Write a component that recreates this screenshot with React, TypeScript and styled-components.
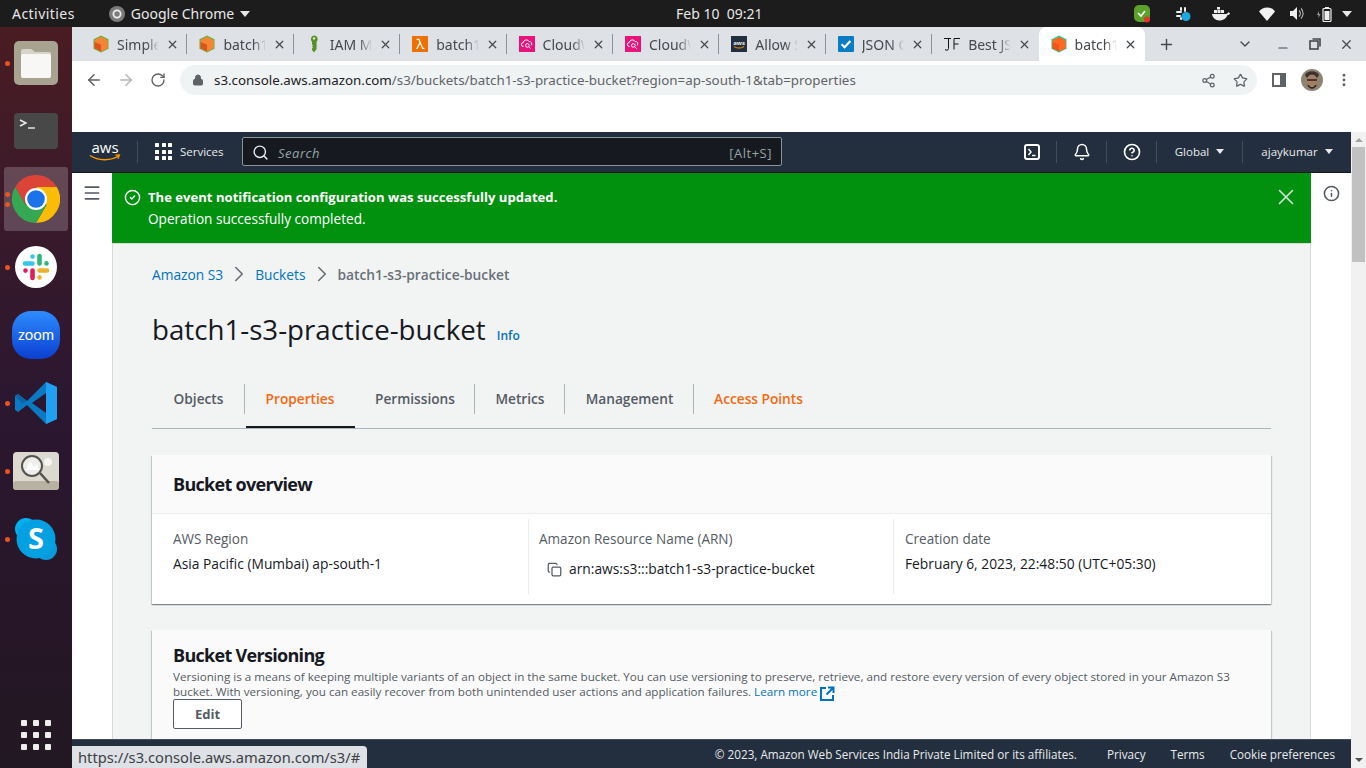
import React from "react";
import styled, { createGlobalStyle } from "styled-components";
import { ArrowLeft, ArrowRight, RotateCw, Lock, Share2, Star, ChevronDown, Plus, X, Minus, MoreVertical, Search, Bell, CircleHelp, CircleCheck, Info, Menu, ChevronRight, Copy } from "lucide-react";

const UI = `"Noto Sans", "Open Sans", sans-serif`;
const AWS = `"Open Sans", "Noto Sans", sans-serif`;

const GlobalStyle = createGlobalStyle`
  html, body { margin: 0; padding: 0; width: 1366px; height: 768px; overflow: hidden; background: #fff; }
  * { box-sizing: border-box; }
`;

const Desktop = styled.div`
  width: 1366px;
  height: 768px;
  display: flex;
  flex-direction: column;
  position: relative;
  overflow: hidden;
  font-family: ${UI};
`;

/* gnome top bar */
const TopBar = styled.div`
  height: 27px;
  flex: none;
  background: #1c1c1c;
  color: #e8e8e6;
  font-size: 14px;
  display: flex;
  align-items: center;
  padding: 0 12px;
`;
const TopLeft = styled.div`
  width: 664px;
  flex: none;
  display: flex;
  align-items: center;
  gap: 34px;
`;
const Activities = styled.span`
  letter-spacing: 0.45px;
`;
const AppMenu = styled.div`
  display: flex;
  align-items: center;
  gap: 6px;
`;
const Caret = styled.span<{ $size?: number; $color?: string }>`
  width: 0;
  height: 0;
  display: inline-block;
  border-left: ${(p) => p.$size ?? 5}px solid transparent;
  border-right: ${(p) => p.$size ?? 5}px solid transparent;
  border-top: ${(p) => (p.$size ?? 5) + 1}px solid ${(p) => p.$color ?? "#e8e8e6"};
`;
const Clock = styled.div`
  word-spacing: 0;
`;
const Tray = styled.div`
  margin-left: auto;
  display: flex;
  align-items: center;
`;
const TraySlot = styled.span<{ $w: number }>`
  width: ${(p) => p.$w}px;
  height: 27px;
  display: inline-flex;
  align-items: center;
  justify-content: center;
`;

const Body = styled.div`
  flex: 1;
  display: flex;
  min-height: 0;
`;

/* ubuntu dock */
const Dock = styled.div`
  width: 72px;
  flex: none;
  display: flex;
  flex-direction: column;
  align-items: center;
  padding: 2px 0 0;
  background: linear-gradient(180deg, #4a1c22 0%, #3a1a2b 25%, #2b1730 50%, #271628 80%, #221822 100%);
`;
const DockItem = styled.div<{ $active?: boolean }>`
  width: 64px;
  height: 64px;
  margin: 2px 0;
  flex: none;
  position: relative;
  display: flex;
  align-items: center;
  justify-content: center;
  border-radius: 3px;
  background: ${(p) => (p.$active ? "rgba(255,255,255,0.2)" : "transparent")};
`;
const Running = styled.span<{ $top: number }>`
  position: absolute;
  left: 1px;
  top: ${(p) => p.$top}px;
  width: 5px;
  height: 5px;
  border-radius: 50%;
  background: #e95420;
`;
const AppGrid = styled.div`
  margin-top: auto;
  margin-bottom: 18px;
  display: grid;
  grid-template-columns: repeat(3, 6px);
  gap: 6px;
`;
const AppDot = styled.span`
  width: 6px;
  height: 6px;
  border-radius: 1px;
  background: #eeeeec;
`;

const Browser = styled.div`
  flex: 1;
  min-width: 0;
  display: flex;
  flex-direction: column;
`;

const TabStrip = styled.div`
  height: 34px;
  flex: none;
  background: #dee1e6;
  display: flex;
  align-items: stretch;
  padding-left: 9px;
`;
const Tab = styled.div<{ $active?: boolean; $last?: boolean }>`
  width: 106.4px;
  flex: none;
  position: relative;
  display: flex;
  align-items: center;
  padding: 0 8px 0 11px;
  gap: 7px;
  color: #45494e;
  font-size: 14px;
  background: ${(p) => (p.$active ? "#fff" : "transparent")};
  border-radius: ${(p) => (p.$active ? "8px 8px 0 0" : "0")};
  &::after {
    content: "";
    display: ${(p) => (p.$active || p.$last ? "none" : "block")};
    position: absolute;
    right: 0;
    top: 7px;
    height: 20px;
    width: 1px;
    background: #8e9196;
  }
`;
const Favicon = styled.span`
  width: 18px;
  height: 18px;
  flex: none;
  display: flex;
  align-items: center;
  justify-content: center;
`;
const TabTitle = styled.span`
  flex: 1;
  min-width: 0;
  white-space: nowrap;
  overflow: hidden;
  -webkit-mask-image: linear-gradient(90deg, #000 70%, transparent 100%);
  mask-image: linear-gradient(90deg, #000 70%, transparent 100%);
`;
const TabActions = styled.div`
  flex: 1;
  display: flex;
  align-items: center;
  color: #45494e;
`;
const IconSlot = styled.span<{ $w: number; $gap?: number }>`
  width: ${(p) => p.$w}px;
  margin-left: ${(p) => p.$gap ?? 0}px;
  flex: none;
  display: inline-flex;
  align-items: center;
  justify-content: center;
`;
const MutedSlot = styled(IconSlot)`
  color: #b4b7bb;
`;

const Toolbar = styled.div`
  height: 38px;
  flex: none;
  display: flex;
  align-items: center;
  background: #fff;
  padding: 0 0 0 10px;
  color: #5f6368;
`;
const Omnibox = styled.div`
  width: 1077px;
  height: 30px;
  margin-left: 10px;
  flex: none;
  border-radius: 15px;
  background: #f0f3f4;
  display: flex;
  align-items: center;
  padding: 0 2px 0 12px;
  font-size: 13.35px;
  color: #5f6368;
`;
const Url = styled.span`
  flex: 1;
  margin-left: 10px;
  b { font-weight: 400; color: #202124; }
`;
const BlankBar = styled.div`
  height: 33px;
  flex: none;
  background: #fff;
`;

const Viewport = styled.div`
  flex: 1;
  min-height: 0;
  display: flex;
`;
const Page = styled.div`
  flex: 1;
  min-width: 0;
  display: flex;
  flex-direction: column;
  font-family: ${AWS};
`;
const ScrollBar = styled.div`
  width: 15px;
  flex: none;
  background: #f1f1f1;
  display: flex;
  flex-direction: column;
  align-items: center;
  justify-content: space-between;
  padding: 6px 0;
  position: relative;
`;
const ScrollThumb = styled.span`
  position: absolute;
  top: 15px;
  left: 1px;
  width: 13px;
  height: 115px;
  background: #c1c1c1;
`;
const ScrollUp = styled.span`
  width: 0;
  height: 0;
  border-left: 4px solid transparent;
  border-right: 4px solid transparent;
  border-bottom: 4px solid #a3a3a3;
`;
const ScrollDown = styled.span`
  width: 0;
  height: 0;
  border-left: 4px solid transparent;
  border-right: 4px solid transparent;
  border-top: 4px solid #505050;
`;

/* aws console header */
const Header = styled.div`
  height: 41px;
  flex: none;
  background: #232f3e;
  border-bottom: 1px solid #16191f;
  padding-bottom: 1px;
  display: flex;
  align-items: center;
  color: #e9ebed;
  font-size: 11.5px;
`;
const Logo = styled.div`
  width: 66px;
  flex: none;
  display: flex;
  justify-content: flex-end;
  padding-right: 16px;
  border-right: 1px solid #414d5c;
  height: 22px;
  align-items: center;
`;
const ServicesButton = styled.div`
  display: flex;
  align-items: center;
  gap: 8px;
  margin-left: 17px;
  width: 87px;
  flex: none;
`;
const Dots = styled.div`
  display: grid;
  grid-template-columns: repeat(3, 4px);
  gap: 2.5px;
`;
const Dot = styled.span`
  width: 4px;
  height: 4px;
  background: #fff;
  border-radius: 0.5px;
`;
const SearchBox = styled.div`
  width: 540px;
  height: 29px;
  flex: none;
  background: #16191f;
  border: 1px solid #879596;
  border-radius: 2px;
  display: flex;
  align-items: center;
  padding: 2px 9px 0 9px;
  color: #95a5a6;
  font-size: 13px;
  letter-spacing: 0.5px;
`;
const SearchLabel = styled.span`
  flex: 1;
  margin-left: 9px;
  font-style: italic;
`;
const HeaderRight = styled.div`
  margin-left: auto;
  display: flex;
  align-items: center;
  height: 22px;
`;
const HeaderCell = styled.div<{ $w: number; $end?: boolean }>`
  width: ${(p) => p.$w}px;
  height: 22px;
  flex: none;
  display: flex;
  align-items: center;
  justify-content: center;
  gap: 7px;
  border-right: ${(p) => (p.$end ? "none" : "1px solid #414d5c")};
`;

const Workspace = styled.div`
  flex: 1;
  min-height: 0;
  display: flex;
  overflow: hidden;
`;
const SideRail = styled.div<{ $right?: boolean }>`
  width: 40px;
  flex: none;
  background: #fff;
  display: flex;
  justify-content: center;
  padding-top: ${(p) => (p.$right ? "12px" : "10px")};
  color: #545b64;
`;
const Center = styled.div`
  flex: 1;
  min-width: 0;
  display: flex;
  flex-direction: column;
`;
const Flash = styled.div`
  height: 71px;
  flex: none;
  background: #02900f;
  border-bottom: 1px solid #d5dbdb;
  color: #fff;
  display: flex;
  padding: 13px 12px 0 12px;
  line-height: 22px;
`;
const FlashIcon = styled.span`
  margin-top: 3px;
  height: 17px;
  display: block;
`;
const FlashText = styled.div`
  flex: 1;
  margin-left: 7px;
  font-size: 13.6px;
  strong { font-size: 13.1px; font-weight: 700; display: block; }
`;
const FlashClose = styled.span`
  margin-top: -2px;
  height: 26px;
  display: block;
  color: #d5e8d5;
`;
const Content = styled.div`
  flex: 1;
  min-height: 0;
  background: #f2f3f3;
  border-left: 1px solid #d5dbdb;
  border-right: 1px solid #d5dbdb;
  padding: 20px 39px 0 39px;
`;
const Crumbs = styled.div`
  display: flex;
  align-items: center;
  height: 20px;
  font-size: 13.75px;
  color: #687078;
  gap: 3px;
`;
const CrumbLink = styled.span`
  color: #0073bb;
`;
const CrumbNow = styled.span`
  font-weight: 600;
`;
const TitleRow = styled.div`
  display: flex;
  align-items: baseline;
  gap: 11px;
  margin-top: 25px;
  height: 40px;
`;
const Title = styled.h1`
  margin: 0;
  font-size: 27.7px;
  line-height: 40px;
  font-weight: 400;
  color: #16191f;
`;
const InfoLink = styled.span`
  color: #0073bb;
  font-size: 12px;
  font-weight: 600;
`;
const Tabs = styled.div`
  display: flex;
  margin-top: 23px;
  height: 57px;
  border-bottom: 1px solid #aab7b8;
  padding-top: 12px;
  align-items: flex-start;
`;
const TabLink = styled.div<{ $w: number; $orange?: boolean; $selected?: boolean }>`
  width: ${(p) => p.$w}px;
  height: 44px;
  flex: none;
  display: flex;
  position: relative;
  justify-content: center;
  font-size: 13.7px;
  font-weight: 600;
  line-height: 30px;
  color: ${(p) => (p.$orange ? "#f26a12" : "#545b64")};
  &::after {
    content: "";
    position: absolute;
    right: 0;
    top: 0;
    height: 30px;
    width: 1px;
    background: ${(p) => (p.$orange ? "transparent" : "#aab7b8")};
  }
  &::before {
    content: "";
    display: ${(p) => (p.$selected ? "block" : "none")};
    position: absolute;
    left: 1px;
    right: 0;
    bottom: 0;
    height: 2px;
    background: #16191f;
  }
`;
const Card = styled.div`
  background: #fff;
  box-shadow: 0 1px 1px 0 rgba(0, 28, 36, 0.3), 1px 1px 1px 0 rgba(0, 28, 36, 0.15), -1px 1px 1px 0 rgba(0, 28, 36, 0.15);
`;
const OverviewCard = styled(Card)`
  margin-top: 26px;
  height: 149px;
  display: flex;
  flex-direction: column;
`;
const CardHead = styled.div`
  height: 59px;
  flex: none;
  background: #fafafa;
  border-bottom: 1px solid #eaeded;
  padding: 0 21px;
  display: flex;
  align-items: center;
`;
const CardTitle = styled.h2`
  margin: 0;
  font-size: 18px;
  font-weight: 700;
  color: #16191f;
  letter-spacing: -0.7px;
`;
const Columns = styled.div`
  display: grid;
  grid-template-columns: 377px 365px 1fr;
  padding: 5px 0 0;
  height: 80px;
`;
const Column = styled.div<{ $last?: boolean }>`
  padding: 10px 10px 0 ${(p) => (p.$last ? "11px" : "10px")};
  height: 75px;
  border-right: ${(p) => (p.$last ? "none" : "1px solid #eaeded")};
  &:first-child { padding-left: 21px; }
`;
const Label = styled.div`
  font-size: 13.55px;
  line-height: 20px;
  color: #545b64;
`;
const Value = styled.div`
  font-size: 13.8px;
  line-height: 20px;
  margin-top: 5px;
  color: #16191f;
`;
const ArnValue = styled(Value)`
  display: flex;
  align-items: center;
  gap: 7px;
  margin-top: 10px;
  padding-left: 8px;
`;
const VersioningCard = styled(Card)`
  margin-top: 26px;
  height: 140px;
  background: #fafafa;
  padding: 13px 21px;
`;
const Description = styled.p`
  margin: 2px 0 0;
  font-size: 11.65px;
  line-height: 15px;
  color: #545b64;
`;
const LearnMore = styled.span`
  color: #0073bb;
  svg { vertical-align: -3px; margin: -2px 0 -2px 0; }
`;
const EditButton = styled.button`
  display: block;
  width: 69px;
  height: 30px;
  margin-top: 0;
  background: #fff;
  border: 1px solid #545b64;
  border-radius: 2px;
  font-family: ${AWS};
  font-size: 13px;
  font-weight: 700;
  color: #545b64;
  padding: 0;
`;
const Footer = styled.div`
  height: 29px;
  flex: none;
  background: #232f3e;
  border-top: 1px solid #414d5c;
  color: #e9ebed;
  font-size: 11.7px;
  display: flex;
  justify-content: flex-end;
  align-items: center;
  padding-right: 16px;
  gap: 25px;
`;
const Copyright = styled.span`
  margin-right: 5px;
`;
const StatusBubble = styled.div`
  position: absolute;
  left: 72px;
  bottom: 0;
  height: 22px;
  width: 295px;
  padding: 0 6px;
  background: #dee1e6;
  border-radius: 0 4px 0 0;
  color: #3c4043;
  font-family: ${UI};
  font-size: 14.7px;
  line-height: 22px;
  white-space: nowrap;
`;

const Cube = ({ top = "#f58536", side = "#d9541e", edge = "#6aae3f" }) => (
  <svg width="18" height="18" viewBox="0 0 18 18">
    <path d="M9 0.5 16.5 4.2V13.8L9 17.5 1.5 13.8V4.2Z" fill={edge} />
    <path d="M9 1.7 15.5 5V13.2L9 16.4 2.5 13.2V5Z" fill={top} />
    <path d="M2.5 7 9 9.8V16.4L2.5 13.2Z" fill={side} />
    <path d="M15.5 7 9 9.8V16.4L15.5 13.2Z" fill={top} />
  </svg>
);
const KeyIcon = () => (
  <svg width="18" height="18" viewBox="0 0 18 18">
    <path d="M9 .5a3.6 3.6 0 0 1 2.6 6.2V14L9 17.5 7 15v-1.5l1-1-1-1 1-1-1-1V6.7A3.6 3.6 0 0 1 9 .5Z" fill="#5a8f29" />
    <circle cx="9" cy="3.4" r="1.2" fill="#dff0c8" />
  </svg>
);
const LambdaIcon = () => (
  <svg width="16" height="16" viewBox="0 0 16 16">
    <rect width="16" height="16" fill="#ed7100" />
    <path d="M4 13 7.4 6.6 6.5 4H4.6V2.8H7.4L11 11.8H12.4V13H10.2L8.1 7.8 5.5 13Z" fill="#fff" />
  </svg>
);
const CloudIcon = () => (
  <svg width="16" height="16" viewBox="0 0 16 16">
    <rect width="16" height="16" fill="#e7157b" />
    <path d="M4.5 10.5a2 2 0 0 1-.2-4A3 3 0 0 1 10 5.6a2.2 2.2 0 0 1 2 3.8" fill="none" stroke="#fff" strokeWidth="1" />
    <circle cx="8.3" cy="9.4" r="1.8" fill="none" stroke="#fff" strokeWidth="1" />
    <path d="m9.6 10.7 2 2" stroke="#fff" strokeWidth="1" />
  </svg>
);
const AwsFavicon = () => (
  <svg width="16" height="16" viewBox="0 0 16 16">
    <rect width="16" height="16" fill="#232f3e" />
    <text x="8" y="8.5" textAnchor="middle" fontSize="6" fontWeight="700" fill="#e9ebed" fontFamily="Open Sans, sans-serif">aws</text>
    <path d="M3 10.5c3 2 7 2 10 0" fill="none" stroke="#f90" strokeWidth="1" />
  </svg>
);
const CheckBox = () => (
  <svg width="16" height="16" viewBox="0 0 16 16">
    <rect width="16" height="16" rx="1" fill="#0a7cc1" />
    <path d="m3.6 8.2 3 3L12.4 5" fill="none" stroke="#fff" strokeWidth="2.2" />
  </svg>
);
const JfIcon = () => (
  <svg width="18" height="18" viewBox="0 0 18 18" fill="none" stroke="#111" strokeWidth="1">
    <path d="M1 3.5H8M5.5 3.5V13.5C5.5 15.5 3 15.5 2 14.5M11 14.5V3.5H17M11 9H15.5" />
  </svg>
);

const FolderIcon = () => (
  <svg width="44" height="44" viewBox="0 0 44 44">
    <rect width="44" height="44" rx="5" fill="#a8a291" />
    <path d="M7 10a2 2 0 0 1 2-2h8l4 3h14a2 2 0 0 1 2 2v22a2 2 0 0 1-2 2H9a2 2 0 0 1-2-2Z" fill="#d8d4c8" />
    <path d="M7 15a2 2 0 0 1 2-2h26a2 2 0 0 1 2 2v20a2 2 0 0 1-2 2H9a2 2 0 0 1-2-2Z" fill="#f8f7f5" />
  </svg>
);
const TerminalIcon = () => (
  <svg width="44" height="36" viewBox="0 0 44 36">
    <rect width="44" height="36" rx="4" fill="#484848" />
    <path d="M6 7 12 10 6 13" fill="none" stroke="#eee" strokeWidth="1.4" />
    <path d="M14 15H21" stroke="#eee" strokeWidth="1.4" />
  </svg>
);
const ChromeIcon = () => (
  <svg width="48" height="48" viewBox="0 0 48 48">
    <path d="M24 12 44.8 12A24 24 0 0 1 24 48L34.4 30Z" fill="#fbbc05" />
    <path d="M24 12H44.8A24 24 0 0 0 3.2 12L13.6 30Z" fill="#db4437" />
    <path d="M13.6 30 3.2 12A24 24 0 0 0 24 48L34.4 30Z" fill="#34a853" />
    <circle cx="24" cy="24" r="11" fill="#fff" />
    <circle cx="24" cy="24" r="8.8" fill="#1a73e8" />
  </svg>
);
const SlackIcon = () => (
  <svg width="42" height="42" viewBox="0 0 42 42">
    <circle cx="21" cy="21" r="21" fill="#fff" />
    <g strokeWidth="4.6" strokeLinecap="round" fill="none">
      <path d="M10 17.500H17.500M17.500 10.500V10.600" stroke="#36c5f0" />
      <path d="M24.500 10V17.500M31.500 17.400V17.500" stroke="#2eb67d" />
      <path d="M24.500 24.500H32M24.500 31.400V31.500" stroke="#ecb22e" />
      <path d="M17.500 24.500V32M10.500 24.500V24.600" stroke="#e01e5a" />
    </g>
  </svg>
);
const ZoomIcon = () => (
  <svg width="48" height="48" viewBox="0 0 48 48">
    <defs>
      <linearGradient id="zg" x1="0" y1="0" x2="0" y2="1">
        <stop offset="0" stopColor="#2d8cff" />
        <stop offset="1" stopColor="#0b3fd0" />
      </linearGradient>
    </defs>
    <rect width="48" height="48" rx="19" fill="url(#zg)" />
    <text x="24" y="28.500" textAnchor="middle" fontSize="15" fontWeight="400" fill="#fff" fontFamily="Lato, sans-serif">zoom</text>
  </svg>
);
const VsCodeIcon = () => (
  <svg width="44" height="44" viewBox="0 0 44 44">
    <path d="M32 1 13 20 4 13 1 15V29L4 31 13 24 32 43 43 38V6Z" fill="#0a7ac4" />
    <path d="M32 1 43 6V38L32 43Z" fill="#20a0ee" />
    <path d="M32 12 18 22 32 32Z" fill="#2b1730" />
    <path d="M1 15 4 13 13 20 9 22 4 26 1 29 8 22Z" fill="#0c63a8" />
  </svg>
);
const ViewerIcon = () => (
  <svg width="46" height="38" viewBox="0 0 46 38">
    <rect width="46" height="38" rx="4" fill="#dcdad0" />
    <rect y="29" width="46" height="9" rx="3" fill="#b7b2a1" />
    <circle cx="35" cy="10" r="4" fill="#f6f5f1" />
    <circle cx="19" cy="14" r="10" fill="#eeedea" stroke="#55534f" strokeWidth="2" />
    <path d="M13 18 17 9 21 15 24 12 26 18Z" fill="#fff" />
    <path d="M27 21 36 31" stroke="#55534f" strokeWidth="2.6" />
  </svg>
);
const SkypeIcon = () => (
  <svg width="42" height="42" viewBox="0 0 42 42">
    <circle cx="11" cy="11" r="11" fill="#00aff0" />
    <circle cx="31" cy="31" r="11" fill="#0b9ad9" />
    <circle cx="21" cy="21" r="19.500" fill="#03a0e2" />
    <text x="21" y="31" textAnchor="middle" fontSize="29" fontWeight="700" fill="#fff" fontFamily="Open Sans, sans-serif">S</text>
  </svg>
);
const AwsLogo = () => (
  <svg width="32" height="20" viewBox="0 0 32 20">
    <text x="16" y="11" textAnchor="middle" fontFamily="Open Sans, sans-serif" fontSize="15" fill="#fff">aws</text>
    <path d="M1 13.500C9 19 22 19 29.500 14" fill="none" stroke="#f90" strokeWidth="1.500" />
    <path d="M26.500 13.200 30.500 13 29 16.800" fill="none" stroke="#f90" strokeWidth="1.200" />
  </svg>
);
const ExternalIcon = () => (
  <svg width="15" height="15" viewBox="0 0 15 15" fill="none" stroke="#0073bb" strokeWidth="2">
    <path d="M6 2H1V14H13V9" />
    <path d="M8 1.500H13.500V7M13 2 6.500 8.500" />
  </svg>
);

const tabs: { icon: React.ReactNode; title: string }[] = [
  { icon: <Cube />, title: "Simple Storage" },
  { icon: <Cube />, title: "batch1-s3" },
  { icon: <KeyIcon />, title: "IAM Mana" },
  { icon: <LambdaIcon />, title: "batch1-fn" },
  { icon: <CloudIcon />, title: "CloudWat" },
  { icon: <CloudIcon />, title: "CloudWat" },
  { icon: <AwsFavicon />, title: "Allow S3" },
  { icon: <CheckBox />, title: "JSON Onl" },
  { icon: <JfIcon />, title: "Best JSON" },
];

const dockApps: { icon: React.ReactNode; dots?: number[]; active?: boolean }[] = [
  { icon: <FolderIcon />, dots: [30] },
  { icon: <TerminalIcon /> },
  { icon: <ChromeIcon />, dots: [25, 35], active: true },
  { icon: <SlackIcon />, dots: [30] },
  { icon: <ZoomIcon /> },
  { icon: <VsCodeIcon />, dots: [30] },
  { icon: <ViewerIcon />, dots: [30] },
  { icon: <SkypeIcon />, dots: [30] },
];

export default function App() {
  return (
    <Desktop>
      <GlobalStyle />
      <TopBar>
        <TopLeft>
          <Activities>Activities</Activities>
          <AppMenu>
            <svg width="16" height="16" viewBox="0 0 16 16">
              <circle cx="8" cy="8" r="8" fill="#7b7b7b" />
              <circle cx="8" cy="8" r="3.600" fill="none" stroke="#eee" strokeWidth="1.800" />
            </svg>
            <span>Google Chrome</span>
            <Caret />
          </AppMenu>
        </TopLeft>
        <Clock>Feb 10&nbsp; 09:21</Clock>
        <Tray>
          <TraySlot $w={64}>
            <svg width="16" height="18" viewBox="0 0 16 18">
              <rect width="16" height="17" rx="5" fill="#5da02a" />
              <path d="m4 8 3 3 4-5" fill="none" stroke="#fff" strokeWidth="1.600" />
              <circle cx="13" cy="14.500" r="3" fill="#e8322c" />
            </svg>
          </TraySlot>
          <TraySlot $w={18}>
            <svg width="16" height="16" viewBox="0 0 16 16">
              <rect x="1" y="5" width="6" height="2" rx="1" fill="#eee" />
              <rect x="5" y="1" width="2" height="4" rx="1" fill="#eee" />
              <rect x="9" y="1" width="2" height="5" rx="1" fill="#eee" />
              <rect x="1" y="9" width="5" height="2" rx="1" fill="#eee" />
              <rect x="5" y="11" width="2" height="3" rx="1" fill="#eee" />
              <circle cx="11" cy="10.500" r="4.500" fill="#1ea7df" />
            </svg>
          </TraySlot>
          <TraySlot $w={58}>
            <svg width="18" height="14" viewBox="0 0 18 14">
              <rect x="5" y="0" width="3" height="2.500" fill="#eee" />
              <path d="M2 3h3v3H2ZM5.500 3h3v3h-3ZM9 3h3v3H9Z" fill="#eee" />
              <path d="M0 7h14c1 0 2-1 2.500-2 .5.500 1.500 1 1.500 1.500-.5 1-1.500 1.500-2.500 1.500-1 3-4 5.500-8 5.500-4.500 0-7-3-7.500-6.500Z" fill="#eee" />
            </svg>
          </TraySlot>
          <TraySlot $w={34}>
            <svg width="16" height="14" viewBox="0 0 16 14">
              <path d="M8 14 0 4.500C4-1 12-1 16 4.500Z" fill="#f2f2f2" />
            </svg>
          </TraySlot>
          <TraySlot $w={24}>
            <svg width="15" height="15" viewBox="0 0 15 15">
              <path d="M1 5H4L8 1V14L4 10H1Z" fill="#eee" />
              <path d="M10 4.500a4 4 0 0 1 0 6M12 2.500a7 7 0 0 1 0 10" fill="none" stroke="#bbb" strokeWidth="1.100" />
            </svg>
          </TraySlot>
          <TraySlot $w={32}>
            <svg width="16" height="16" viewBox="0 0 16 16">
              <path d="M1 9 3 5V8H4.500L2.500 12V9Z" fill="#999" />
              <rect x="7" y="2.500" width="8" height="13" rx="1" fill="none" stroke="#eee" strokeWidth="1.200" />
              <rect x="9" y="1" width="4" height="1.500" fill="#eee" />
              <rect x="8.500" y="5" width="5" height="9" fill="#eee" />
            </svg>
          </TraySlot>
          <TraySlot $w={14}>
            <Caret />
          </TraySlot>
        </Tray>
      </TopBar>
      <Body>
        <Dock>
          {dockApps.map((app, i) => (
            <DockItem key={i} $active={app.active}>
              {app.icon}
              {app.dots?.map((d) => <Running key={d} $top={d} />)}
            </DockItem>
          ))}
          <AppGrid>
            {Array.from({ length: 9 }).map((_, i) => <AppDot key={i} />)}
          </AppGrid>
        </Dock>
        <Browser>
          <TabStrip>
            {tabs.map((t, i) => (
              <Tab key={i} $last={i === tabs.length - 1}>
                <Favicon>{t.icon}</Favicon>
                <TabTitle>{t.title}</TabTitle>
                <X size={13} strokeWidth={2.200} />
              </Tab>
            ))}
            <Tab $active>
              <Favicon><Cube top="#ff6a1f" side="#f0561a" edge="#25c7a0" /></Favicon>
              <TabTitle>batch1-s3</TabTitle>
              <X size={13} strokeWidth={2.200} />
            </Tab>
            <TabActions>
              <IconSlot $w={44}><Plus size={17} strokeWidth={2} /></IconSlot>
              <IconSlot $w={34} $gap={39}><ChevronDown size={16} strokeWidth={2} /></IconSlot>
              <IconSlot $w={42}><Minus size={14} strokeWidth={2} style={{ marginTop: 8 }} /></IconSlot>
              <IconSlot $w={22}>
                <svg width="12" height="12" viewBox="0 0 12 12" fill="none" stroke="#45494e" strokeWidth="1.600">
                  <rect x="1" y="3" width="8" height="8" />
                  <path d="M3.500 1H11V8.500" />
                </svg>
              </IconSlot>
              <IconSlot $w={42}><X size={15} strokeWidth={2} /></IconSlot>
            </TabActions>
          </TabStrip>
          <Toolbar>
            <IconSlot $w={24}><ArrowLeft size={18} strokeWidth={2} /></IconSlot>
            <MutedSlot $w={40}><ArrowRight size={18} strokeWidth={2} /></MutedSlot>
            <IconSlot $w={24}><RotateCw size={16} strokeWidth={2} /></IconSlot>
            <Omnibox>
              <Lock size={12} fill="#5f6368" strokeWidth={2} />
              <Url><b>s3.console.aws.amazon.com</b>/s3/buckets/batch1-s3-practice-bucket?region=ap-south-1&amp;tab=properties</Url>
              <IconSlot $w={34}><Share2 size={15} strokeWidth={2} /></IconSlot>
              <IconSlot $w={30}><Star size={15} strokeWidth={2} /></IconSlot>
            </Omnibox>
            <IconSlot $w={44}>
              <svg width="14" height="14" viewBox="0 0 14 14">
                <path d="M0 0H14V14H0ZM2 2V12H8V2Z" fill="#5f6368" fillRule="evenodd" />
              </svg>
            </IconSlot>
            <IconSlot $w={22}>
              <svg width="22" height="22" viewBox="0 0 22 22">
                <circle cx="11" cy="11" r="11" fill="#8c8572" />
                <path d="M4 6C6 1 16 1 18 6L16 9H6Z" fill="#3c3230" />
                <ellipse cx="11" cy="12" rx="5.500" ry="6.500" fill="#a87e62" />
                <path d="M6 11H16M7 16C9 20 13 20 15 16" stroke="#2a2422" strokeWidth="1.500" fill="none" />
              </svg>
            </IconSlot>
            <IconSlot $w={42}><MoreVertical size={16} strokeWidth={2.400} /></IconSlot>
          </Toolbar>
          <BlankBar />
          <Viewport>
            <Page>
              <Header>
                <Logo><AwsLogo /></Logo>
                <ServicesButton>
                  <Dots>{Array.from({ length: 9 }).map((_, i) => <Dot key={i} />)}</Dots>
                  <span>Services</span>
                </ServicesButton>
                <SearchBox>
                  <Search size={17} color="#e9ebed" strokeWidth={2} />
                  <SearchLabel>Search</SearchLabel>
                  <span>[Alt+S]</span>
                </SearchBox>
                <HeaderRight>
                  <HeaderCell $w={50}>
                    <svg width="16" height="16" viewBox="0 0 16 16" fill="none" stroke="#fff" strokeWidth="2">
                      <rect x="1" y="1" width="14" height="14" rx="2" />
                      <path d="M4.500 5 7 8 4.500 11M8 11.500H11.500" strokeWidth="1.500" />
                    </svg>
                  </HeaderCell>
                  <HeaderCell $w={50}><Bell size={18} strokeWidth={2} color="#fff" /></HeaderCell>
                  <HeaderCell $w={50}><CircleHelp size={18} strokeWidth={2.200} color="#fff" /></HeaderCell>
                  <HeaderCell $w={86}>
                    <span>Global</span>
                    <Caret $size={4} $color="#e9ebed" />
                  </HeaderCell>
                  <HeaderCell $w={108} $end>
                    <span>ajaykumar</span>
                    <Caret $size={4} $color="#e9ebed" />
                  </HeaderCell>
                </HeaderRight>
              </Header>
              <Workspace>
                <SideRail><Menu size={20} strokeWidth={2} /></SideRail>
                <Center>
                  <Flash>
                    <FlashIcon><CircleCheck size={17} strokeWidth={2} /></FlashIcon>
                    <FlashText>
                      <strong>The event notification configuration was successfully updated.</strong>
                      Operation successfully completed.
                    </FlashText>
                    <FlashClose><X size={26} strokeWidth={1.500} /></FlashClose>
                  </Flash>
                  <Content>
                    <Crumbs>
                      <CrumbLink>Amazon S3</CrumbLink>
                      <ChevronRight size={26} strokeWidth={1.500} color="#687078" />
                      <CrumbLink>Buckets</CrumbLink>
                      <ChevronRight size={26} strokeWidth={1.500} color="#687078" />
                      <CrumbNow>batch1-s3-practice-bucket</CrumbNow>
                    </Crumbs>
                    <TitleRow>
                      <Title>batch1-s3-practice-bucket</Title>
                      <InfoLink>Info</InfoLink>
                    </TitleRow>
                    <Tabs>
                      <TabLink $w={93}>Objects</TabLink>
                      <TabLink $w={110} $orange $selected>Properties</TabLink>
                      <TabLink $w={120}>Permissions</TabLink>
                      <TabLink $w={90}>Metrics</TabLink>
                      <TabLink $w={129}>Management</TabLink>
                      <TabLink $w={129} $orange>Access Points</TabLink>
                    </Tabs>
                    <OverviewCard>
                      <CardHead><CardTitle>Bucket overview</CardTitle></CardHead>
                      <Columns>
                        <Column>
                          <Label>AWS Region</Label>
                          <Value>Asia Pacific (Mumbai) ap-south-1</Value>
                        </Column>
                        <Column>
                          <Label>Amazon Resource Name (ARN)</Label>
                          <ArnValue><Copy size={15} strokeWidth={2} color="#545b64" />arn:aws:s3:::batch1-s3-practice-bucket</ArnValue>
                        </Column>
                        <Column $last>
                          <Label>Creation date</Label>
                          <Value>February 6, 2023, 22:48:50 (UTC+05:30)</Value>
                        </Column>
                      </Columns>
                    </OverviewCard>
                    <VersioningCard>
                      <CardTitle>Bucket Versioning</CardTitle>
                      <Description>
                        Versioning is a means of keeping multiple variants of an object in the same bucket. You can use versioning to preserve, retrieve, and restore every version of every object stored in your Amazon S3 bucket. With versioning, you can easily recover from both unintended user actions and application failures. <LearnMore>Learn more <ExternalIcon /></LearnMore>
                      </Description>
                      <EditButton>Edit</EditButton>
                    </VersioningCard>
                  </Content>
                </Center>
                <SideRail $right><Info size={17} strokeWidth={2.200} /></SideRail>
              </Workspace>
              <Footer>
                <Copyright>© 2023, Amazon Web Services India Private Limited or its affiliates.</Copyright>
                <span>Privacy</span>
                <span>Terms</span>
                <span>Cookie preferences</span>
              </Footer>
            </Page>
            <ScrollBar>
              <ScrollUp />
              <ScrollThumb />
              <ScrollDown />
            </ScrollBar>
          </Viewport>
        </Browser>
      </Body>
      <StatusBubble>https://s3.console.aws.amazon.com/s3/#</StatusBubble>
    </Desktop>
  );
}
